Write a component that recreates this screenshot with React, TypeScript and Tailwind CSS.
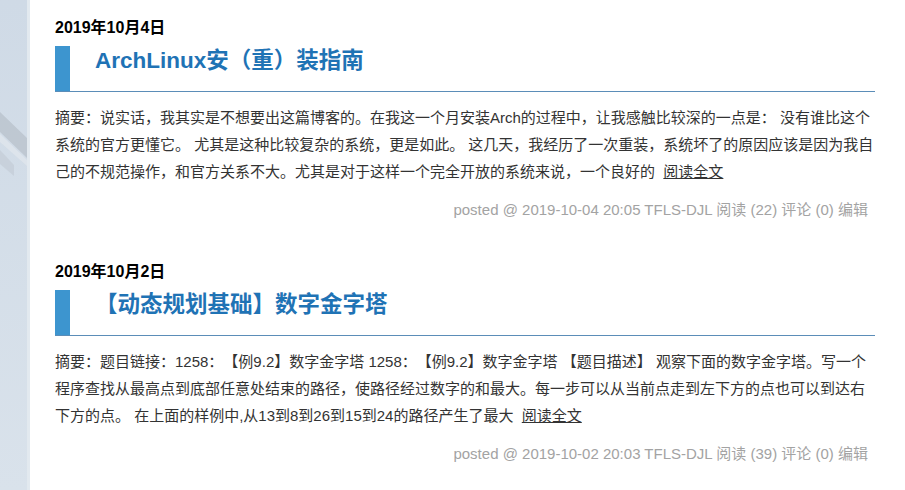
import React from 'react';

type Post = {
  date: string;
  title: string;
  summary: string;
  posted: string;
};

const posts: Post[] = [
  {
    date: '2019年10月4日',
    title: 'ArchLinux安（重）装指南',
    summary:
      '摘要：说实话，我其实是不想要出这篇博客的。在我这一个月安装Arch的过程中，让我感触比较深的一点是： 没有谁比这个系统的官方更懂它。 尤其是这种比较复杂的系统，更是如此。 这几天，我经历了一次重装，系统坏了的原因应该是因为我自己的不规范操作，和官方关系不大。尤其是对于这样一个完全开放的系统来说，一个良好的',
    posted: 'posted @ 2019-10-04 20:05 TFLS-DJL 阅读 (22) 评论 (0) 编辑',
  },
  {
    date: '2019年10月2日',
    title: '【动态规划基础】数字金字塔',
    summary:
      '摘要：题目链接：1258：【例9.2】数字金字塔 1258：【例9.2】数字金字塔 【题目描述】 观察下面的数字金字塔。写一个程序查找从最高点到底部任意处结束的路径，使路径经过数字的和最大。每一步可以从当前点走到左下方的点也可以到达右下方的点。 在上面的样例中,从13到8到26到15到24的路径产生了最大',
    posted: 'posted @ 2019-10-02 20:03 TFLS-DJL 阅读 (39) 评论 (0) 编辑',
  },
];

function SideStrip() {
  return (
    <div className="w-[30px] shrink-0 bg-gradient-to-b from-[#cfdae6] to-[#d9e2eb]">
      <svg width="30" height="490" viewBox="0 0 30 490" className="block">
        <polygon points="0,112 27,138 27,158 0,132" fill="#b7bfc9" opacity="0.7" />
        <polygon points="0,150 14,165 14,176 0,164" fill="#c2cad3" opacity="0.6" />
        <polygon points="0,134 27,160 27,166 0,142" fill="#e4e9ef" opacity="0.6" />
        <rect x="27" y="0" width="3" height="490" fill="#e2e9ef" />
      </svg>
    </div>
  );
}

function PostItem({ post }: { post: Post }) {
  return (
    <div className="mb-[42px]">
      <div className="text-[16px] leading-[20px] font-bold text-black">{post.date}</div>
      <div className="mt-[8px] h-[46px] flex border-b border-[#5b8db8]">
        <div className="w-[15px] bg-[#3d95cf]" />
        <div className="pl-[25px] pt-[2px] text-[22.5px] leading-[25px] font-bold text-[#1f73b5]">
          {post.title}
        </div>
      </div>
      <p className="mt-[12px] text-[15px] leading-[27px] text-[#333]">
        {post.summary}
        {'\u00a0\u00a0'}
        <a href="#" className="inline-block leading-[20px] underline text-[#333]">
          阅读全文
        </a>
      </p>
      <div className="mt-[15px] pr-[7px] text-right text-[15px] leading-[20px] text-[#a3a3a3]">
        {post.posted}
      </div>
    </div>
  );
}

export default function App() {
  return (
    <div
      className="flex h-[490px] w-[905px] overflow-hidden bg-white [text-spacing-trim:space-all]"
      style={{ fontFamily: '"Liberation Sans", "Noto Sans CJK SC", sans-serif' }}
    >
      <SideStrip />
      <div className="flex-1 bg-white pl-[25px] pr-[30px] pt-[18px]">
        {posts.map((p) => (
          <PostItem key={p.date} post={p} />
        ))}
      </div>
    </div>
  );
}
